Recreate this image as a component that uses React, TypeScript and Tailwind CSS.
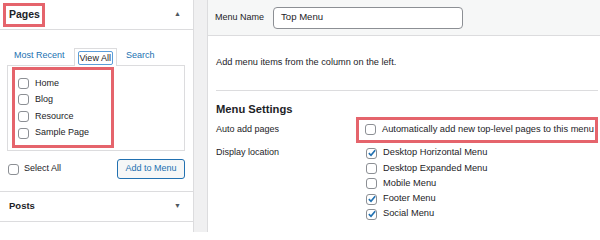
import React from "react";

const font = { fontFamily: '"Liberation Sans", Arial, sans-serif' };

function Box({ checked = false }: { checked?: boolean }) {
  return (
    <span className="relative inline-block w-[11px] h-[11px] shrink-0 rounded-[3px] border border-[#8c8f94] bg-white">
      {checked && (
        <svg viewBox="0 0 12 12" className="absolute left-[0px] top-[-1px] w-[10px] h-[10px]">
          <path d="M2.2 6.2 L4.8 8.8 L9.8 2.6" fill="none" stroke="#2271b1" strokeWidth="2" />
        </svg>
      )}
    </span>
  );
}

function Item({ label, checked, h = "h-[16.6px]" }: { label: string; checked?: boolean; h?: string }) {
  return (
    <label className={`flex items-center gap-[6px] whitespace-nowrap ${h}`}>
      <Box checked={checked} />
      <span>{label}</span>
    </label>
  );
}

export default function App() {
  return (
    <div style={font} className="w-[600px] h-[232px] flex bg-[#f0f0f1] overflow-hidden text-[9px] text-[#1d2327]">
      {/* left column */}
      <div className="w-[194px] shrink-0 bg-white border-r border-[#dcdcde] flex flex-col">
        <div className="h-[30px] border-b border-[#dcdcde] flex items-center justify-between pl-[3px] pr-[12px]">
          <div className="border-[3px] border-[#e5646c] h-[24px] w-[42px] flex items-center pl-[3px] font-bold text-[10.5px]">Pages</div>
          <span className="text-[7px] text-[#50575e]">▲</span>
        </div>
        <div className="px-[7px] pt-[16px]">
          <div className="flex items-end gap-[9px] pl-[7px] h-[19px] text-[#2271b1]">
            <span className="pb-[3px]">Most Recent</span>
            <span className="border border-b-0 border-[#dcdcde] px-[3px] pt-[2px] pb-[1px] bg-white -mb-px relative">
              <span className="border border-[#5b9dd9] rounded-[2px] px-[1px] text-[#1d2327] block leading-[12px]">View All</span>
            </span>
            <span className="pb-[3px]">Search</span>
          </div>
          <div className="border border-[#dcdcde] h-[86px] w-[178px] pt-[1px] pl-[4px]">
            <div className="border-[3px] border-[#e5646c] w-[102px] h-[81px] pl-[3px] pt-[5px] flex flex-col">
              <Item label="Home" />
              <Item label="Blog" />
              <Item label="Resource" />
              <Item label="Sample Page" />
            </div>
          </div>
          <div className="flex items-center justify-between mt-[8px] pr-[1px]">
            <label className="flex items-center gap-[5px] pl-[1px]">
              <Box />
              <span>Select All</span>
            </label>
            <button className="h-[20px] w-[68px] border border-[#2271b1] rounded-[3px] bg-[#f6f7f7] text-[#2271b1]">Add to Menu</button>
          </div>
        </div>
        <div className="mt-[12px] border-t border-[#dcdcde] h-[31px] border-b flex items-center justify-between pl-[9px] pr-[12px]">
          <span className="font-bold text-[9.5px]">Posts</span>
          <span className="text-[7px] text-[#50575e]">▼</span>
        </div>
      </div>

      {/* right column */}
      <div className="ml-[13px] flex-1 bg-white border-l border-[#dcdcde] flex flex-col">
        <div className="h-[36px] bg-[#f6f7f7] border-b border-[#dcdcde] flex items-center pl-[7px]">
          <span className="w-[58px]">Menu Name</span>
          <div className="w-[190px] h-[22px] border border-[#8c8f94] rounded-[4px] bg-white flex items-center pl-[7px] text-[9.6px]">Top Menu</div>
        </div>
        <div className="px-[8px] flex flex-col">
          <p className="mt-[20px] text-[9.2px]">Add menu items from the column on the left.</p>
          <div className="mt-[20px] border-t border-[#dcdcde]" />
          <h3 className="mt-[10px] font-bold text-[11.2px] leading-[16px]">Menu Settings</h3>
          <div className="flex">
            <div className="w-[150px] flex flex-col">
              <span className="h-[26px] flex items-center">Auto add pages</span>
              <span className="mt-[3px]">Display location</span>
            </div>
            <div className="flex flex-col text-[9.3px]">
              <div className="border-[3px] border-[#e5646c] w-[242px] h-[26px] flex items-center pl-[6px] -ml-[10px]">
                <Item label="Automatically add new top-level pages to this menu" />
              </div>
              <div className="flex flex-col pt-[3px]">
                <Item h="h-[15.25px]" label="Desktop Horizontal Menu" checked />
                <Item h="h-[15.25px]" label="Desktop Expanded Menu" />
                <Item h="h-[15.25px]" label="Mobile Menu" />
                <Item h="h-[15.25px]" label="Footer Menu" checked />
                <Item h="h-[15.25px]" label="Social Menu" checked />
              </div>
            </div>
          </div>
        </div>
      </div>
    </div>
  );
}
